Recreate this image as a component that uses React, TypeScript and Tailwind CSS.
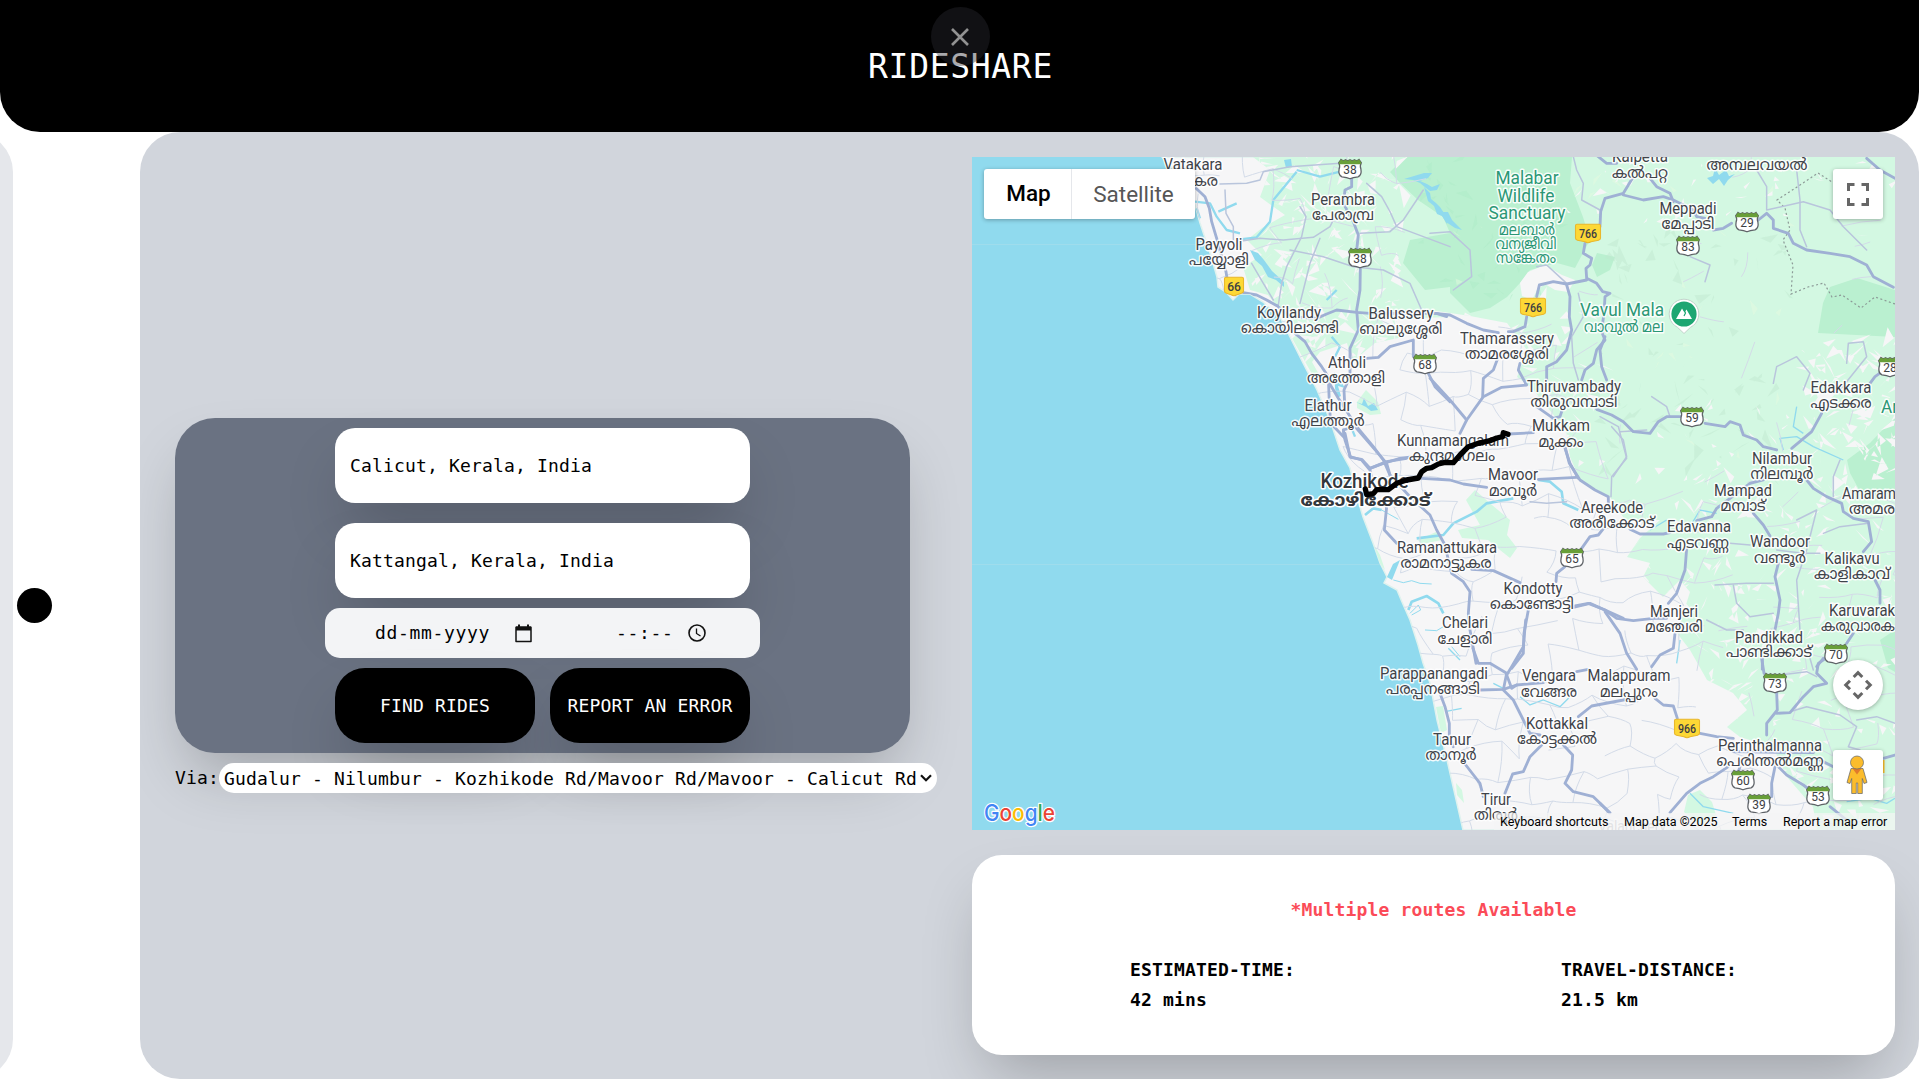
import React from "react";

/* ---------- map data ---------- */

type Label = [text: string, x: number, y: number, width: number, kind?: "green" | "city" | "start" | "greenStart" | "faded"];

const LABELS: Label[] = [
  ["Vatakara", 1193, 164, 59],
  ["Perambra", 1343, 199, 64],
  ["Payyoli", 1219, 244, 47],
  ["Koyilandy", 1289, 312, 64],
  ["Balussery", 1401, 313, 65],
  ["Atholi", 1347, 362, 38],
  ["Elathur", 1328, 405, 47],
  ["Kunnamangalam", 1453, 440, 112],
  ["Mavoor", 1513, 474, 50],
  ["Mukkam", 1561, 425, 58],
  ["Thiruvambady", 1574, 386, 94],
  ["Thamarassery", 1507, 338, 94],
  ["Meppadi", 1688, 208, 57],
  ["Kalpetta", 1640, 156, 56],
  ["Malabar", 1527, 178, 63, "green"],
  ["Wildlife", 1526, 196, 57, "green"],
  ["Sanctuary", 1527, 213, 77, "green"],
  ["Vavul Mala", 1622, 310, 84, "green"],
  ["Edakkara", 1841, 387, 61],
  ["Ar", 1881, 407, 17, "greenStart"],
  ["Nilambur", 1782, 458, 60],
  ["Mampad", 1743, 490, 58],
  ["Amaram", 1842, 493, 54, "start"],
  ["Areekode", 1612, 507, 62],
  ["Edavanna", 1699, 526, 64],
  ["Wandoor", 1780, 541, 60],
  ["Kalikavu", 1852, 558, 55],
  ["Manjeri", 1674, 611, 48],
  ["Karuvarak", 1829, 610, 66, "start"],
  ["Pandikkad", 1769, 637, 68],
  ["Ramanattukara", 1447, 547, 100],
  ["Kondotty", 1533, 588, 59],
  ["Chelari", 1465, 622, 46],
  ["Parappanangadi", 1434, 673, 108],
  ["Vengara", 1549, 675, 54],
  ["Malappuram", 1629, 675, 83],
  ["Kottakkal", 1557, 723, 62],
  ["Tanur", 1452, 739, 38],
  ["Tirur", 1496, 799, 30],
  ["Perinthalmanna", 1770, 745, 104],
  ["Valanchery", 1632, 826, 68, "faded"],
];

const LOCAL_LABELS: Label[] = [
  ["വടകര", 1193, 180, 50],
  ["പേരാമ്പ്ര", 1343, 214, 62],
  ["പയ്യോളി", 1219, 259, 60],
  ["കൊയിലാണ്ടി", 1290, 327, 98],
  ["ബാലുശ്ശേരി", 1401, 328, 83],
  ["അത്തോളി", 1346, 377, 78],
  ["എലത്തൂർ", 1328, 420, 73],
  ["കുന്ദമംഗലം", 1452, 455, 86],
  ["മാവൂർ", 1513, 490, 48],
  ["മുക്കം", 1561, 441, 45],
  ["തിരുവമ്പാടി", 1574, 401, 87],
  ["താമരശ്ശേരി", 1507, 353, 84],
  ["മേപ്പാടി", 1688, 223, 53],
  ["കൽപറ്റ", 1640, 172, 56],
  ["അമ്പലവയൽ", 1757, 164, 101],
  ["മലബാർ", 1527, 229, 56, "green"],
  ["വന്യജീവി", 1526, 243, 61, "green"],
  ["സങ്കേതം", 1526, 257, 60, "green"],
  ["വാവുൽ മല", 1624, 326, 80, "green"],
  ["എടക്കര", 1841, 402, 61],
  ["നിലമ്പൂർ", 1782, 473, 63],
  ["മമ്പാട്", 1743, 505, 45],
  ["അമര", 1849, 508, 46, "start"],
  ["അരീക്കോട്", 1612, 522, 85],
  ["എടവണ്ണ", 1698, 542, 62],
  ["വണ്ടൂർ", 1780, 557, 52],
  ["കാളികാവ്", 1852, 573, 76],
  ["മഞ്ചേരി", 1674, 626, 58],
  ["കരുവാരക", 1821, 625, 74, "start"],
  ["പാണ്ടിക്കാട്", 1769, 651, 86],
  ["രാമനാട്ടുകര", 1446, 562, 91],
  ["കൊണ്ടോട്ടി", 1532, 603, 84],
  ["ചേളാരി", 1465, 638, 55],
  ["പരപ്പനങ്ങാടി", 1433, 688, 94],
  ["വേങ്ങര", 1549, 691, 56],
  ["മലപ്പുറം", 1629, 691, 58],
  ["കോട്ടക്കൽ", 1557, 738, 80],
  ["താനൂർ", 1451, 754, 51],
  ["തിരൂർ", 1496, 814, 44],
  ["പെരിന്തൽമണ്ണ", 1770, 760, 107],
];

const STATE_SHIELDS: [string, number, number][] = [
  ["38", 1350, 169], ["38", 1360, 258], ["68", 1425, 364], ["29", 1747, 222], ["83", 1688, 246],
  ["59", 1692, 417], ["28", 1890, 367], ["65", 1572, 558], ["70", 1836, 654], ["73", 1775, 683],
  ["60", 1743, 780], ["39", 1759, 804], ["53", 1818, 796],
];

const NATIONAL_SHIELDS: [string, number, number][] = [
  ["66", 1234, 286], ["766", 1588, 233], ["766", 1533, 307], ["966", 1687, 728],
];

const LAND =
  "M1162 157 L1176 172 1195 205 1200 223 1210 253 1217 277 1218 287 1226 292 1233 300 1239 294 1250 294 1263 302 1280 317 1290 337 1303 363 1317 390 1330 420 1340 450 1350 468 1358 500 1363 517 1373 543 1380 563 1387 577 1384 583 1397 590 1402 602 1410 620 1418 645 1423 663 1430 683 1437 720 1447 760 1463 830 1895 830 1895 157Z";

const GREEN =
  "M1253 157 L1270 170 1260 197 1285 215 1262 228 1247 240 1262 255 1243 267 1250 290 1268 295 1280 310 1293 340 1317 383 1325 385 1312 362 1320 352 1347 343 1352 362 1375 343 1403 337 1396 320 1420 318 1450 317 1430 310 1470 316 1507 323 1527 350 1517 377 1532 388 1547 407 1566 430 1570 457 1580 480 1610 497 1625 520 1660 520 1640 538 1627 557 1650 563 1643 577 1663 597 1680 580 1690 592 1677 633 1690 650 1707 680 1733 693 1747 710 1727 727 1740 737 1773 747 1787 777 1813 807 1817 830 1895 830 1895 157Z";

const LIGHT_GREEN_PATCHES = [
  "M1357 402 L1366 390 1378 402 1381 414 1370 415 1357 408Z",
  "M1466 500 L1475 490 1492 505 1510 520 1507 535 1517 548 1510 558 1500 550 1488 540 1462 538 1458 530 1480 525Z",
  "M1418 540 L1436 532 1442 540 1422 544Z",
  "M1374 545 L1380 555 1385 570 1379 562Z",
  "M1436 707 L1443 706 1447 730 1441 733Z",
  "M1456 783 L1462 790 1464 803 1457 795Z",
  "M1688 795 L1700 790 1712 802 1716 815 1700 825 1684 812Z",
  "M1540 240 L1570 262 1560 300 1548 290Z",
];

const DARK_GREEN = [
  "M1405 157 L1572 157 1570 183 1583 217 1590 240 1575 268 1557 263 1530 270 1520 283 1507 297 1490 308 1470 313 1450 293 1450 287 1425 290 1403 263 1410 240 1450 233 1443 217 1418 200 1400 183 1390 172Z",
  "M1830 287 L1857 278 1895 290 1895 337 1818 333 1823 303Z",
  "M1895 417 L1870 443 1847 460 1850 473 1863 497 1895 493Z",
  "M1597 253 L1615 257 1610 270 1597 277 1592 265Z",
  "M1895 630 L1880 640 1888 668 1895 672Z",
];

/* Roads are kept in tile space, three units to the pixel, one group for each tile origin. */
const MAJOR: { at: [number, number]; d: string[] }[] = [
  {
    at: [970, 150],
    d: [
      "M675 112 L705 140 718 175 725 215 740 265 755 320 768 365 772 390",
      "M820 428 L860 435 890 450 922 468",
      "M975 550 L1005 575 1025 610 1055 650 1075 680 1078 760 1082 820",
      "M1078 700 L1105 745 1160 830 1210 890 1240 930 1262 980",
      "M922 468 L960 500 1040 505 1070 492 1100 480 1160 487 1200 490 1400 490 1430 500",
      "M1145 82 L1145 110 1125 120 1120 160 1150 215 1165 255 1160 300",
      "M1171 355 L1170 420 1160 480 1165 540 1140 595 1140 680 1122 720 1125 780",
      "M1190 625 L1225 622 1260 590 1330 570 1330 620",
      "M1375 670 L1395 710 1440 755",
      "M1125 850 L1140 920 1175 930 1200 960 1205 985",
      "M1200 955 L1240 940 1290 925 1330 920",
      "M1082 820 L1125 865 1120 840 1150 830",
    ],
  },
  {
    at: [1430, 150],
    d: [
      "M480 0 L530 40 560 40",
      "M610 80 L580 130 525 145 512 185 510 230",
      "M580 135 L640 150 700 140 730 150 790 180 800 200 825 205",
      "M660 85 L680 110 720 130 730 155",
      "M465 280 L460 310 485 325 480 345 468 355 470 385 500 400 518 425 540 430 525 440 522 490 515 540",
      "M470 390 L410 402 370 395 328 405 320 440",
      "M290 500 L285 530 250 545 235 545",
      "M15 490 L60 495 110 520 160 540 205 548",
      "M850 240 L880 235 905 220",
      "M985 210 L1010 190 1030 210 1030 235 1075 250 1090 280 1130 300 1200 310 1260 320 1310 345 1330 380 1390 412",
      "M1310 25 L1350 60 1395 85",
      "M410 405 L420 440 418 500 425 540 410 600 380 635 350 650 350 690",
      "M515 545 L525 570 500 600 490 640 465 660 455 690",
      "M525 560 L510 600 515 650 530 690",
      "M270 640 L265 660 290 705 215 712 160 740 110 810 90 850",
      "M205 620 L190 660 160 685 158 740",
      "M0 685 L60 750 110 810",
      "M235 852 L310 848",
      "M320 770 L370 805 390 800 400 770",
      "M500 778 L545 795 580 815 610 845 660 850 685 815 710 800 760 800",
      "M825 820 L885 830 900 815 930 825 940 855 980 870 1000 890 1040 900",
      "M1370 655 L1335 680 1320 700",
      "M1175 790 L1145 845 1085 895",
      "M405 895 L420 940 445 985",
    ],
  },
  {
    at: [1230, 400],
    d: [
      "M340 90 L345 120 362 172 395 178 420 205 470 185 530 175",
      "M375 80 L440 155 470 190 480 225 540 290 600 345 620 390 645 435 655 480 665 520 700 545 720 575 715 640 720 690 738 790",
      "M575 235 L660 240 700 252 770 262",
      "M925 238 L1040 232",
      "M470 320 L463 390 500 430",
      "M725 508 L790 512 870 548",
      "M895 630 L882 700 880 760 845 805",
      "M1035 618 L1075 610 1125 630 1180 655",
    ],
  },
  {
    at: [1530, 400],
    d: [
      "M105 140 L118 190 150 240 195 270 235 290 235 310",
      "M225 380 L205 405 180 410 155 445",
      "M105 500 L80 520 78 545",
      "M300 388 L330 402 400 402 420 398",
      "M500 362 L545 350 560 325 600 295 660 250 700 240",
      "M470 445 L465 510 440 580 415 610",
      "M130 622 L180 610 225 630 260 655 310 662 370 655 410 655",
      "M225 635 L270 700 290 760 320 808",
      "M435 700 L430 745 390 765 365 800",
      "M670 340 L700 375 720 408",
      "M745 490 L735 530 750 600 745 640 735 690",
      "M830 240 L850 265 890 290 935 310 940 335 970 355 1015 365 1025 425 1000 455",
      "M1035 540 L1050 570 1050 610",
      "M970 700 L950 730",
      "M880 775 L860 800",
      "M697 775 L697 808",
    ],
  },
  {
    at: [1330, 620],
    d: [
      "M425 75 L445 130 480 130 530 160 520 210 550 240 580 300 600 340 630 345",
      "M587 0 L580 80 545 140 530 165",
      "M450 210 L520 208 560 195 640 188",
      "M530 165 L545 205 560 195",
      "M330 220 L345 260 358 310 358 350 370 380",
      "M405 432 L450 490 460 530",
      "M635 375 L600 410 580 455 548 462 525 520",
      "M700 375 L728 405 725 450 705 490 730 515 790 530 840 578",
      "M740 155 L775 148",
      "M745 290 L785 258 880 240 920 232",
    ],
  },
  {
    at: [1600, 620],
    d: [
      "M165 235 L190 255 220 258 232 295",
      "M300 340 L350 350 400 355",
      "M385 440 L340 470 300 490 260 520 210 578",
      "M525 440 L515 490 515 530",
      "M535 440 L560 465 610 495 630 510",
      "M530 218 L532 270 500 310 500 345",
      "M530 280 L570 278 610 230 640 200 680 190 650 160 655 130 685 110",
      "M690 560 L740 600",
      "M660 420 L700 440",
      "M485 115 L492 160",
      "M850 415 L885 405",
      "M0 550 L28 578",
      "M420 440 L415 455",
      "M400 395 L640 398",
    ],
  },
];

const MINOR: { at: [number, number]; d: string[] }[] = [
  {
    at: [970, 150],
    d: [
      "M750 102 L830 100 870 90 880 65 960 50 1110 40",
      "M765 120 L768 190 790 230 790 270",
      "M820 272 L870 265 940 270 1030 262 1080 230 1100 190",
      "M990 170 L1008 200 995 260 950 350 935 400 925 465",
      "M1050 265 L1020 340 1000 420 990 460",
      "M960 300 L1060 320 1150 350 1240 360 1320 400 1355 480",
      "M1170 250 L1260 245 1300 210 1360 120",
      "M1190 100 L1235 140 1260 185 1280 230 1440 290",
      "M845 340 L880 400 910 450",
    ],
  },
  {
    at: [1430, 150],
    d: [
      "M430 20 L440 60 460 100 455 150 510 180",
      "M0 250 L60 245 120 300 125 380 70 420",
      "M980 60 L1010 110 1010 180 1120 155 1200 180 1240 230 1310 300",
      "M1100 60 L1110 150 1110 240 1130 290",
      "M780 320 L840 345 825 395",
      "M445 430 L460 500 425 560 430 640 445 690",
      "M320 350 L350 345 410 400",
      "M665 740 L710 770 720 800",
      "M545 830 L580 870 590 920 550 980",
      "M1250 640 L1255 580 1300 575 1310 620 1230 720",
      "M1030 700 L1040 650 1100 620 1140 670 1120 720",
    ],
  },
  {
    at: [1530, 400],
    d: [
      "M210 50 L265 80 290 175 245 230 243 290",
      "M270 95 L350 90",
      "M555 555 L650 550 730 550",
      "M530 660 L590 690 640 690",
      "M600 430 L660 435",
      "M740 450 L820 460 870 460",
      "M610 555 L620 610 660 650 730 640",
      "M800 360 L860 330 830 450 800 540 810 690",
      "M930 180 L910 230 910 290",
      "M0 305 L50 310 110 305",
      "M880 400 L930 380 1015 370",
    ],
  },
  {
    at: [1600, 620],
    d: [
      "M570 275 L620 260 720 285 770 320 745 380 780 390",
      "M540 165 L620 155 650 170",
      "M620 80 L640 150",
      "M770 300 L830 290 885 310",
    ],
  },
];

const RIVERS: { at: [number, number]; w: number; d: string[] }[] = [
  {
    at: [970, 150], w: 7,
    d: [
      "M675 155 L720 160 740 200 770 240 810 250",
      "M745 185 L800 160", "M810 268 L860 262 900 215 910 150 980 65",
      "M980 60 L1050 80 1110 65", "M680 175 L690 205", "M1085 560 L1110 590 1095 620", "M1070 450 L1100 420",
      "M1145 835 L1155 860",
    ],
  },
  {
    at: [1230, 400], w: 8,
    d: [
      "M560 415 L640 405 670 370 740 335 770 310 850 295", "M925 240 L960 245 995 275 1000 310 1045 330",
      "M405 345 L430 325 455 330",
      "M535 630 L545 605 590 588 625 610 640 640",
    ],
  },
  { at: [1230, 400], w: 3, d: ["M455 330 L505 358", "M490 540 L520 548 545 542 570 550 605 552", "M585 690 L620 692 640 680", "M665 740 L690 770", "M540 640 L565 615 572 630 545 645"] },
  { at: [1530, 400], w: 4, d: ["M480 380 L510 330 560 340", "M360 390 L410 360", "M760 150 L750 115 800 110 850 140 940 180", "M800 20 L790 80 820 100"] },
  { at: [1330, 620], w: 4, d: ["M570 230 L600 255 640 240 690 260 720 230", "M345 275 L395 265", "M355 85 L390 120", "M490 190 L520 205"] },
  { at: [1600, 620], w: 4, d: ["M740 545 L810 535 860 550 885 535", "M270 520 L310 560 400 580", "M240 60 L230 130"] },
];

const LAKES = [
  "M1404 179 L1414 176 1424 173 1432 173 1428 178 1420 181 1427 184 1432 187 1440 184 1437 190 1430 191 1426 188 1420 183 1413 180Z",
  "M1424 187 L1430 193 1431 199 1436 203 1440 207 1444 213 1449 216 1447 224 1442 216 1437 214 1434 206 1428 201Z",
  "M1440 212 L1448 212 1452 220 1462 230 1455 228 1446 222Z",
  "M1250 250 L1258 253 1264 260 1272 271 1284 282 1284 287 1276 280 1268 277 1262 266 1255 260Z",
  "M1356 402 L1362 404 1364 398 1368 406 1374 403 1378 410 1371 411 1366 407Z",
  "M1387 577 L1393 564 1400 560 1392 580Z",
  "M1707 178 L1713 176 1715 168 1719 175 1726 170 1729 176 1735 174 1728 180 1724 186 1719 179 1713 184Z",
  "M1334 372 L1340 380 1345 388 1338 386 1341 396 1337 398 1335 388Z",
  "M1284 160 L1291 159 1292 167 1286 168Z",
];

function seeded(seed: number) {
  let s = seed;
  return () => {
    s = (s * 1664525 + 1013904223) % 4294967296;
    return s / 4294967296;
  };
}

/* Irregular net of local lanes over the land. */
function buildLanes() {
  const rnd = seeded(11);
  const step = 25;
  const cols = 32;
  const rows = 29;
  const pts: [number, number][][] = [];
  for (let r = 0; r < rows; r++) {
    const row: [number, number][] = [];
    for (let c = 0; c < cols; c++) {
      row.push([1150 + c * step + (rnd() - 0.5) * 18, 150 + r * step + (rnd() - 0.5) * 18]);
    }
    pts.push(row);
  }
  let d = "";
  const link = (a: [number, number], b: [number, number]) => {
    const mx = (a[0] + b[0]) / 2 + (rnd() - 0.5) * 8;
    const my = (a[1] + b[1]) / 2 + (rnd() - 0.5) * 8;
    d += `M${a[0].toFixed(1)} ${a[1].toFixed(1)}Q${mx.toFixed(1)} ${my.toFixed(1)} ${b[0].toFixed(1)} ${b[1].toFixed(1)}`;
  };
  for (let r = 0; r < rows - 1; r++) {
    for (let c = 0; c < cols - 1; c++) {
      const [x, y] = pts[r][c];
      const forest = (x > 1580 && y < 480) || (x > 1400 && y < 310);
      const upland = (x > 1680 && y >= 480) || y < 330;
      const skip = forest ? 0.96 : upland ? 0.6 : 0.18;
      if (rnd() > skip) link(pts[r][c], pts[r][c + 1]);
      if ((r + c) % 2 === 0 && rnd() > skip) link(pts[r][c], pts[r + 1][c]);
    }
  }
  return d;
}

function buildShards(seed: number, count: number, box: [number, number, number, number], size: number) {
  const rnd = seeded(seed);
  let d = "";
  for (let i = 0; i < count; i++) {
    const x = box[0] + rnd() * (box[2] - box[0]);
    const y = box[1] + rnd() * (box[3] - box[1]);
    const p = () => ((rnd() - 0.5) * size * 2).toFixed(1);
    d += `M${x.toFixed(1)} ${y.toFixed(1)}l${p()} ${p()} ${p()} ${p()}Z`;
  }
  return d;
}

const LANES = buildLanes();
const CLEARINGS =
  buildShards(3, 200, [1250, 157, 1400, 380], 13) +
  buildShards(5, 40, [1570, 157, 1895, 240], 8) +
  buildShards(7, 40, [1560, 400, 1895, 480], 7) +
  buildShards(9, 260, [1630, 480, 1895, 830], 11) +
  buildShards(13, 80, [1800, 340, 1895, 480], 13) +
  buildShards(15, 40, [1400, 300, 1600, 420], 12);
const WOODS = buildShards(21, 50, [1420, 160, 1570, 300], 10);
const HILLS = buildShards(23, 75, [1590, 230, 1790, 480], 12);
const HIGHLIGHTS = buildShards(29, 45, [1440, 170, 1800, 470], 9);

function TileGroup({ at, children }: { at: [number, number]; children: React.ReactNode }) {
  return <g transform={`translate(${at[0]} ${at[1]}) scale(0.33333)`}>{children}</g>;
}

function MapLabel({ label, local }: { label: Label; local?: boolean }) {
  const [text, x, y, width, kind] = label;
  const green = kind === "green" || kind === "greenStart";
  const start = kind === "start" || kind === "greenStart";
  return (
    <text
      x={x}
      y={y + 5.7}
      textAnchor={start ? "start" : "middle"}
      textLength={width}
      lengthAdjust="spacingAndGlyphs"
      fontSize={local ? 15.5 : green ? 17.5 : 16.2}
      fill={green ? "#2b9775" : kind === "faded" ? "#b5b7bb" : "#3f4349"}
      stroke="#ffffff"
      strokeWidth={3}
      strokeLinejoin="round"
      strokeOpacity={0.9}
      paintOrder="stroke"
    >
      {text}
    </text>
  );
}

function StateShield({ n, x, y }: { n: string; x: number; y: number }) {
  return (
    <g transform={`translate(${x} ${y})`}>
      <path
        d="M-9 -9.500 Q-6.500 -7.400 -4.500 -9.200 Q-2.200 -7.400 0 -9.200 Q2.200 -7.400 4.500 -9.200 Q6.500 -7.400 9 -9.500 L11.300 -6.200 Q9.600 -3.600 10.900 0 Q12 6 8 7.800 Q3 8.200 0 9.800 Q-3 8.200 -8 7.800 Q-12 6 -10.900 0 Q-9.600 -3.600 -11.300 -6.200Z"
        fill="#fff"
        stroke="#5f6368"
        strokeWidth="1.300"
      />
      <path
        d="M-9 -9.500 Q-6.500 -7.400 -4.500 -9.200 Q-2.200 -7.400 0 -9.200 Q2.200 -7.400 4.500 -9.200 Q6.500 -7.400 9 -9.500 L11.300 -6.200 L10.500 -4.800 H-10.500 L-11.300 -6.200Z"
        fill="#689f38"
      />
      <text y="5.200" textAnchor="middle" fontSize="12" fill="#3c4043">{n}</text>
    </g>
  );
}

function NationalShield({ n, x, y }: { n: string; x: number; y: number }) {
  const w = n.length === 3 ? 12.5 : 9.5;
  return (
    <g transform={`translate(${x} ${y})`}>
      <path
        d={`M${-w + 1.5} -8.7 H${w - 1.5} Q${w} -8.7 ${w} -7.2 V5 Q${w} 6.8 ${w - 2} 7.2 L3 8.8 Q0 10.6 -3 8.8 L${-w + 2} 7.2 Q${-w} 6.8 ${-w} 5 V-7.2 Q${-w} -8.7 ${-w + 1.5} -8.7Z`}
        fill="#fdd835"
        stroke="#e9b72c"
        strokeWidth="1.100"
      />
      <text y="5" textAnchor="middle" fontSize="12" fontWeight="500" fill="#3c4043" textLength={w * 1.45} lengthAdjust="spacingAndGlyphs">{n}</text>
    </g>
  );
}

function MapCanvas() {
  return (
    <svg className="block h-full w-full font-['Roboto','Noto_Sans_Malayalam','Noto_Sans',sans-serif]" viewBox="972 157 923 673" aria-label="Map">
      <defs>
        <clipPath id="land"><path d={LAND} /></clipPath>
        <clipPath id="green"><path d={GREEN} /></clipPath>
      </defs>
      <rect x="972" y="157" width="923" height="673" fill="#90daee" />
      <path d="M972 244.500H1210M972 564.500H1380" stroke="#9fdcec" strokeWidth="1" />
      <path d={LAND} fill="#f6f6f7" stroke="#dff2ee" strokeWidth="1.500" />
      <g clipPath="url(#land)">
        <path d={GREEN} fill="#d3f8e2" />
        {LIGHT_GREEN_PATCHES.map((d) => <path key={d} d={d} fill="#d3f8e2" />)}
        <g clipPath="url(#green)">
          {DARK_GREEN.map((d) => <path key={d} d={d} fill="#baf0d0" />)}
          <path d={WOODS} fill="#aeebc8" opacity="0.500" />
          <path d={HILLS} fill="#bfe6cf" opacity="0.450" />
          <path d={HIGHLIGHTS} fill="#e6fae0" opacity="0.450" />
          <path d={CLEARINGS} fill="#f6f6f7" />
        </g>
        <path d="M1520 283 L1528 272 1545 265 1562 275 1575 280 1568 292 1555 290 1545 284 1537 290 1532 300 1522 296Z" fill="#f6f6f7" />
        {LAKES.map((d) => <path key={d} d={d} fill="#90daee" />)}
        {RIVERS.map((r) => (
          <TileGroup key={r.d[0]} at={r.at}>
            {r.d.map((d) => <path key={d} d={d} fill="none" stroke="#90daee" strokeWidth={r.w} strokeLinejoin="round" />)}
          </TileGroup>
        ))}
        <path d={LANES} fill="none" stroke="#d3dbe8" strokeWidth="1" strokeLinejoin="round" />
        <path
          d="M1895 304 L1875 297 1861 308 1842 295 1832 297 1824 283 1808 287 1791 294 1793 265 1783 240 1790 230 1785 208 1777 200 1797 187 1818 173 1832 182"
          fill="none" stroke="#8c9a97" strokeWidth="1.200" strokeDasharray="2 2.500"
        />
        {MINOR.map((r) => (
          <TileGroup key={r.d[0]} at={r.at}>
            {r.d.map((d) => <path key={d} d={d} fill="none" stroke="#b9c5dc" strokeWidth="4.500" strokeLinejoin="round" strokeLinecap="round" />)}
          </TileGroup>
        ))}
        {MAJOR.map((r) => (
          <TileGroup key={r.d[0]} at={r.at}>
            {r.d.map((d) => <path key={d} d={d} fill="none" stroke="#9fb0d4" strokeWidth="8.500" strokeLinejoin="round" strokeLinecap="round" />)}
          </TileGroup>
        ))}
      </g>

      {STATE_SHIELDS.map(([n, x, y]) => <StateShield key={`${n}-${x}`} n={n} x={x} y={y} />)}
      {NATIONAL_SHIELDS.map(([n, x, y]) => <NationalShield key={`${n}-${x}`} n={n} x={x} y={y} />)}
      <rect x="1883" y="760" width="1.500" height="13" fill="#fbc02d" />

      {LOCAL_LABELS.map((l) => <MapLabel key={l[0]} label={l} local />)}
      {LABELS.map((l) => <MapLabel key={l[0]} label={l} />)}
      <g stroke="#fff" strokeWidth="3" strokeLinejoin="round" paintOrder="stroke" fill="#33373c" textAnchor="middle">
        <text x="1364.500" y="487.500" fontSize="20" fontWeight="500" textLength="88" lengthAdjust="spacingAndGlyphs">Kozhikode</text>
        <text x="1365.500" y="505.500" fontSize="17.500" fontWeight="700" textLength="130" lengthAdjust="spacingAndGlyphs">കോഴിക്കോട്</text>
      </g>

      <g transform="translate(1684 314)">
        <path d="M0 19.500 L-6.500 13.300 A14.800 14.800 0 1 1 6.500 13.300Z" fill="#fff" stroke="#b9c9c2" strokeWidth="0.800" />
        <circle r="12.600" fill="#1ea672" />
        <path d="M-8 5 L-2 -5.500 L0.500 -1.500 L2.500 -4.500 L8 5Z" fill="#fff" />
        <path d="M-0.500 -5 L1.500 -1 L0 2" fill="none" stroke="#1ea672" strokeWidth="1.200" />
      </g>

      <TileGroup at={[1230, 400]}>
        <path
          d="M406 267 L410 284 430 281 440 269 475 269 500 250 530 240 565 234 575 215 590 205 605 203 625 192 645 187 670 188 690 165 715 140 745 130 780 122 800 114 818 110 820 98 834 103"
          fill="none" stroke="#000" strokeWidth="16" strokeLinejoin="round" strokeLinecap="round"
        />
      </TileGroup>

      <text
        x="984" y="821" fontSize="23" fontWeight="500" textLength="71" lengthAdjust="spacingAndGlyphs"
        stroke="#fff" strokeWidth="2.500" strokeLinejoin="round" paintOrder="stroke" fontFamily="Inter, sans-serif"
      >
        <tspan fill="#4285f4">G</tspan><tspan fill="#ea4335">o</tspan><tspan fill="#fbbc04">o</tspan><tspan fill="#4285f4">g</tspan><tspan fill="#34a853">l</tspan><tspan fill="#ea4335">e</tspan>
      </text>
    </svg>
  );
}

/* ---------- map controls ---------- */

function MapPanel() {
  return (
    <div className="relative h-[673px] w-[923px] shrink-0 overflow-hidden font-['Roboto',sans-serif] tracking-normal">
      <MapCanvas />
      <div className="absolute left-3 top-3 flex h-[50px] w-[211px] rounded-[3px] bg-white text-[22.5px] shadow-[0_1px_4px_rgba(0,0,0,0.3)]">
        <button className="w-[87px] rounded-l-[3px] pl-[2px] font-medium text-black">Map</button>
        <button className="flex-1 border-l border-gray-200 pt-px text-[#565656]">Satellite</button>
      </div>
      <button className="absolute right-3 top-3 flex size-[50px] items-center justify-center rounded-[3px] bg-white shadow-[0_1px_4px_rgba(0,0,0,0.3)]">
        <svg className="h-[23px] w-[22px]" viewBox="0 0 22 23" fill="none" stroke="#666" strokeWidth="3">
          <path d="M7.500 1.500H1.500V8M14.500 1.500H20.500V8M1.500 15V21.500H7.500M20.500 15V21.500H14.500" />
        </svg>
      </button>
      <button className="absolute bottom-[120px] right-3 flex size-[50px] items-center justify-center rounded-full bg-white shadow-[0_1px_4px_rgba(0,0,0,0.3)]">
        <svg className="size-[30px]" viewBox="0 0 30 30" fill="none" stroke="#666" strokeWidth="3">
          <path d="M10.700 7 L15 2.700 19.300 7M10.700 23 L15 27.300 19.300 23M7 10.700 L2.700 15 7 19.300M23 10.700 L27.300 15 23 19.300" />
        </svg>
      </button>
      <button className="absolute bottom-[30px] right-3 flex size-[50px] items-center justify-center rounded-[3px] bg-white pr-[2px] shadow-[0_1px_4px_rgba(0,0,0,0.3)]">
        <svg className="h-[40px] w-[22px]" viewBox="0 0 22 40" stroke="#5f6368" strokeWidth="0.700">
          <path d="M5 13.500 H17 L21 27.500 L18 28.500 L16.300 23.500 V38.500 H11.700 V28 H10.300 V38.500 H5.700 V23.500 L4 28.500 L1 27.500Z" fill="#fbbc2c" />
          <path d="M6.500 13.500 H15.500 L11 19.500Z" fill="#e07a2b" stroke="none" />
          <circle cx="11" cy="7.500" r="6.500" fill="#fbbc2c" />
        </svg>
      </button>
      <div className="absolute bottom-0 right-0 flex h-[17px] items-center gap-[15px] bg-[#f5f5f5]/70 pl-[6px] pr-2 pt-px text-[12.5px] leading-none text-black">
        <span className="w-[109px] whitespace-nowrap">Keyboard shortcuts</span>
        <span className="w-[93px] whitespace-nowrap">Map data ©2025</span>
        <span className="w-9 whitespace-nowrap">Terms</span>
        <span className="w-[104px] whitespace-nowrap">Report a map error</span>
      </div>
    </div>
  );
}

/* ---------- page ---------- */

function CalendarIcon() {
  return (
    <svg className="h-[19px] w-[17px]" viewBox="0 0 17 19">
      <path d="M1 3.200H16V17.500H1Z" fill="none" stroke="#111" strokeWidth="1.500" strokeLinejoin="round" />
      <path d="M1 2.500H16V6.500H1ZM3 0.500H5V3H3ZM12 0.500H14V3H12Z" fill="#111" />
    </svg>
  );
}

function ClockIcon() {
  return (
    <svg className="size-[18px]" viewBox="0 0 18 18" fill="none" stroke="#111">
      <circle cx="9" cy="9" r="8" strokeWidth="1.600" />
      <path d="M8.500 4.500V9.500L12.500 12" strokeWidth="1.300" />
    </svg>
  );
}

function PlaceField({ value }: { value: string }) {
  return (
    <div className="flex h-[75px] w-[415px] items-center rounded-[20px] bg-white px-[15px] shadow-[0_31px_62px_-15px_rgba(0,0,0,0.25)]">
      {value}
    </div>
  );
}

function ActionButton({ children }: { children: React.ReactNode }) {
  return (
    <button className="flex h-[75px] w-[200px] items-center justify-center whitespace-nowrap rounded-[30px] bg-black text-white shadow-[0_31px_62px_-15px_rgba(0,0,0,0.25)]">
      {children}
    </button>
  );
}

function RideForm() {
  return (
    <div className="flex w-[735px] shrink-0 flex-col justify-center gap-[10px]">
      <div className="flex h-[335px] flex-col items-center rounded-[40px] bg-[#6a7282] pt-[10px] shadow-[0_31px_62px_-15px_rgba(0,0,0,0.25)]">
        <PlaceField value="Calicut, Kerala, India" />
        <div className="h-5" />
        <PlaceField value="Kattangal, Kerala, India" />
        <div className="mt-[10px] flex h-[50px] w-[435px] items-center rounded-[15px] bg-gray-100">
          <span className="mb-px ml-[50px] w-[140px] tracking-[0.65px]">dd-mm-yyyy</span>
          <CalendarIcon />
          <span className="mb-px ml-[84px] w-[72px] tracking-[0.65px]">--:--</span>
          <ClockIcon />
        </div>
        <div className="mt-[10px] flex gap-[15px]">
          <ActionButton>FIND RIDES</ActionButton>
          <ActionButton>REPORT AN ERROR</ActionButton>
        </div>
      </div>
      <div className="flex h-[30px] w-max items-center">
        <span className="mb-px w-11">Via:</span>
        <div className="flex h-[30px] w-[718px] items-center rounded-[15px] bg-white pl-[5px]">
          <span className="w-[696px] whitespace-nowrap">Gudalur - Nilumbur - Kozhikode Rd/Mavoor Rd/Mavoor - Calicut Rd</span>
          <svg className="h-2 w-3" viewBox="0 0 12 8" fill="none" stroke="#111" strokeWidth="2.200">
            <path d="M1 1.200 L6 6.200 11 1.200" />
          </svg>
        </div>
      </div>
    </div>
  );
}

function TripSummary() {
  return (
    <div className="flex h-[200px] w-[923px] shrink-0 flex-col rounded-[30px] bg-white pt-[40px] font-bold text-black shadow-[0_31px_62px_-15px_rgba(0,0,0,0.25)]">
      <p className="text-center leading-[30px] text-[#fb4b58]">*Multiple routes Available</p>
      <div className="mt-[30px] flex leading-[30px]">
        <div className="ml-[158px] w-[431px]">
          <p>ESTIMATED-TIME:</p>
          <p>42 mins</p>
        </div>
        <div>
          <p>TRAVEL-DISTANCE:</p>
          <p>21.5 km</p>
        </div>
      </div>
    </div>
  );
}

export default function App() {
  return (
    <div className="flex h-[1079px] w-[1919px] flex-col overflow-hidden bg-white font-['DejaVu_Sans_Mono',monospace] text-[18px] tracking-[0.163px] text-black">
      <header className="relative flex h-[132px] shrink-0 items-center justify-center rounded-b-[40px] bg-black pl-[2px] pt-[2px] text-white">
        <h1 className="text-[33px] tracking-[0.68px]">RIDESHARE</h1>
        <button className="absolute left-[931px] top-[7px] flex size-[59px] items-center justify-center rounded-full bg-[#2a2b32]/40 pr-px">
          <svg className="size-[18px]" viewBox="0 0 18 18" fill="none" stroke="#929292" strokeWidth="2.600">
            <path d="M1 1 L17 17M17 1 L1 17" />
          </svg>
        </button>
      </header>
      <main className="flex h-[947px] shrink-0">
        <aside className="w-[13px] overflow-hidden">
          <div className="-ml-[87px] h-full w-[100px] rounded-[40px] bg-gray-200" />
        </aside>
        <div className="flex w-[127px] items-center pl-[4px]">
          <div className="size-[35px] rounded-full bg-black" />
        </div>
        <section className="flex w-[1779px] overflow-hidden rounded-[40px] bg-[#d1d5dc] pl-[35px]">
          <RideForm />
          <div className="ml-[62px] flex flex-col gap-[25px] pt-[25px]">
            <MapPanel />
            <TripSummary />
          </div>
        </section>
      </main>
    </div>
  );
}
